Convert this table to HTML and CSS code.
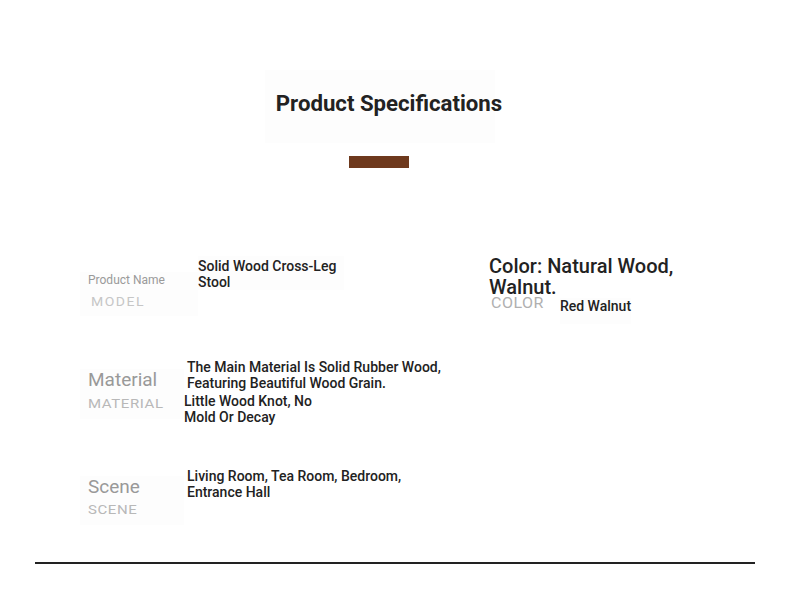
FILE: index.html
```html
<!DOCTYPE html>
<html>
<head>
<meta charset="utf-8">
<link rel="stylesheet" href="styles.css">
</head>
<body>
<div class="page">
  <header class="head">
    <div class="title-box"><h1 class="title">Product Specifications</h1></div>
    <div class="bar"></div>
  </header>

  <section class="specs">
    <div class="row row-1">
      <div class="left">
        <div class="label label-sm">
          <div class="label-main">Product Name</div>
          <div class="label-sub sub-sm">MODEL</div>
        </div>
        <div class="value value-1">Solid Wood Cross-Leg Stool</div>
      </div>
      <div class="right">
        <div class="color-title">Color: Natural Wood, Walnut.</div>
        <div class="color-line">
          <span class="label-sub sub-md">COLOR</span>
          <span class="value">Red Walnut</span>
        </div>
      </div>
    </div>

    <div class="row row-2">
      <div class="label label-lg">
        <div class="label-main big">Material</div>
        <div class="label-sub sub-lg sub-mat">MATERIAL</div>
      </div>
      <div class="values">
        <div class="value value-2">The Main Material Is Solid Rubber Wood, Featuring Beautiful Wood Grain.</div>
        <div class="value value-3">Little Wood Knot, No Mold Or Decay</div>
      </div>
    </div>

    <div class="row row-3">
      <div class="label label-lg">
        <div class="label-main big">Scene</div>
        <div class="label-sub sub-lg sub-scene">SCENE</div>
      </div>
      <div class="values">
        <div class="value value-4">Living Room, Tea Room, Bedroom, Entrance Hall</div>
      </div>
    </div>
  </section>

  <div class="rule"></div>
</div>
</body>
</html>
```

FILE: styles.css
```css
html, body {
  margin: 0;
  padding: 0;
  background: #ffffff;
}
body {
  font-family: Roboto, "Liberation Sans", sans-serif;
  color: #222;
  width: 790px;
  height: 592px;
  overflow: hidden;
}
.page {
  padding-top: 70px;
}
.head {
  display: flex;
  flex-direction: column;
  align-items: center;
  padding-right: 30px;
}
.title-box {
  width: 230px;
  height: 73px;
  box-sizing: border-box;
  padding-bottom: 7px;
  background: #fdfdfd;
  display: flex;
  align-items: center;
  justify-content: center;
}
.title {
  margin: 0;
  padding-left: 18px;
  flex-shrink: 0;
  white-space: nowrap;
  font-size: 22.2px;
  font-weight: 700;
  color: #222;
  line-height: 26px;
}
.bar {
  width: 60px;
  height: 12px;
  background: #6e391d;
  margin-top: 13px;
  margin-left: -2px;
}
.specs {
  padding-left: 80px;
  margin-top: 88px;
}
.row {
  display: flex;
  align-items: flex-start;
}
.row-1 {
  height: 103px;
}
.left {
  display: flex;
  width: 409px;
  align-items: flex-start;
}
.label {
  padding-left: 8px;
  background: #fdfdfd;
  display: flex;
  flex-direction: column;
}
.label-sm {
  width: 110px;
  margin-top: 16px;
  padding-bottom: 6px;
}
.label-lg {
  width: 96px;
  padding-bottom: 6px;
}
.label-main {
  font-size: 12px;
  line-height: 16px;
  color: #9a9a9a;
}
.label-main.big {
  font-size: 19px;
  line-height: 22px;
  color: #999;
}
.label-sub {
  color: #c4c4c4;
  transform: scaleY(0.9);
  transform-origin: left center;
}
.sub-sm {
  font-size: 14px;
  line-height: 16px;
  letter-spacing: 1.5px;
  margin-top: 6px;
  padding-left: 3px;
  color: #c6c6c6;
}
.sub-md {
  font-size: 16px;
  line-height: 18px;
  letter-spacing: 0.5px;
  color: #b0b0b0;
}
.sub-lg {
  font-size: 15px;
  line-height: 18px;
  letter-spacing: 0.6px;
  color: #b8b8b8;
}
.sub-mat {
  margin-top: 4px;
}
.sub-scene {
  margin-top: 3px;
}
.value {
  font-size: 14px;
  line-height: 16px;
  font-weight: 500;
  color: #222;
}
.value-1 {
  width: 146px;
  padding-top: 2px;
  background: #fdfdfd;
}
.right {
  display: flex;
  flex-direction: column;
}
.color-title {
  width: 200px;
  font-size: 20px;
  font-weight: 500;
  line-height: 21px;
  color: #222;
}
.color-line {
  display: flex;
  align-items: flex-start;
  margin-top: -3px;
  padding-left: 2px;
}
.color-line .value {
  margin-left: 16px;
  margin-top: 3px;
  background: #fdfdfd;
  padding-bottom: 10px;
}
.row-2 {
  height: 109px;
}
.row-2 .label {
  margin-top: 10px;
}
.values {
  display: flex;
  flex-direction: column;
}
.value-2 {
  width: 270px;
  margin-left: 3px;
}
.value-3 {
  width: 140px;
  margin-top: 2px;
}
.row-3 {
  height: 94px;
}
.row-3 .label {
  margin-top: 8px;
}
.value-4 {
  width: 250px;
  margin-left: 3px;
}
.rule {
  width: 720px;
  height: 2px;
  background: #222;
  margin-left: 35px;
}
```
